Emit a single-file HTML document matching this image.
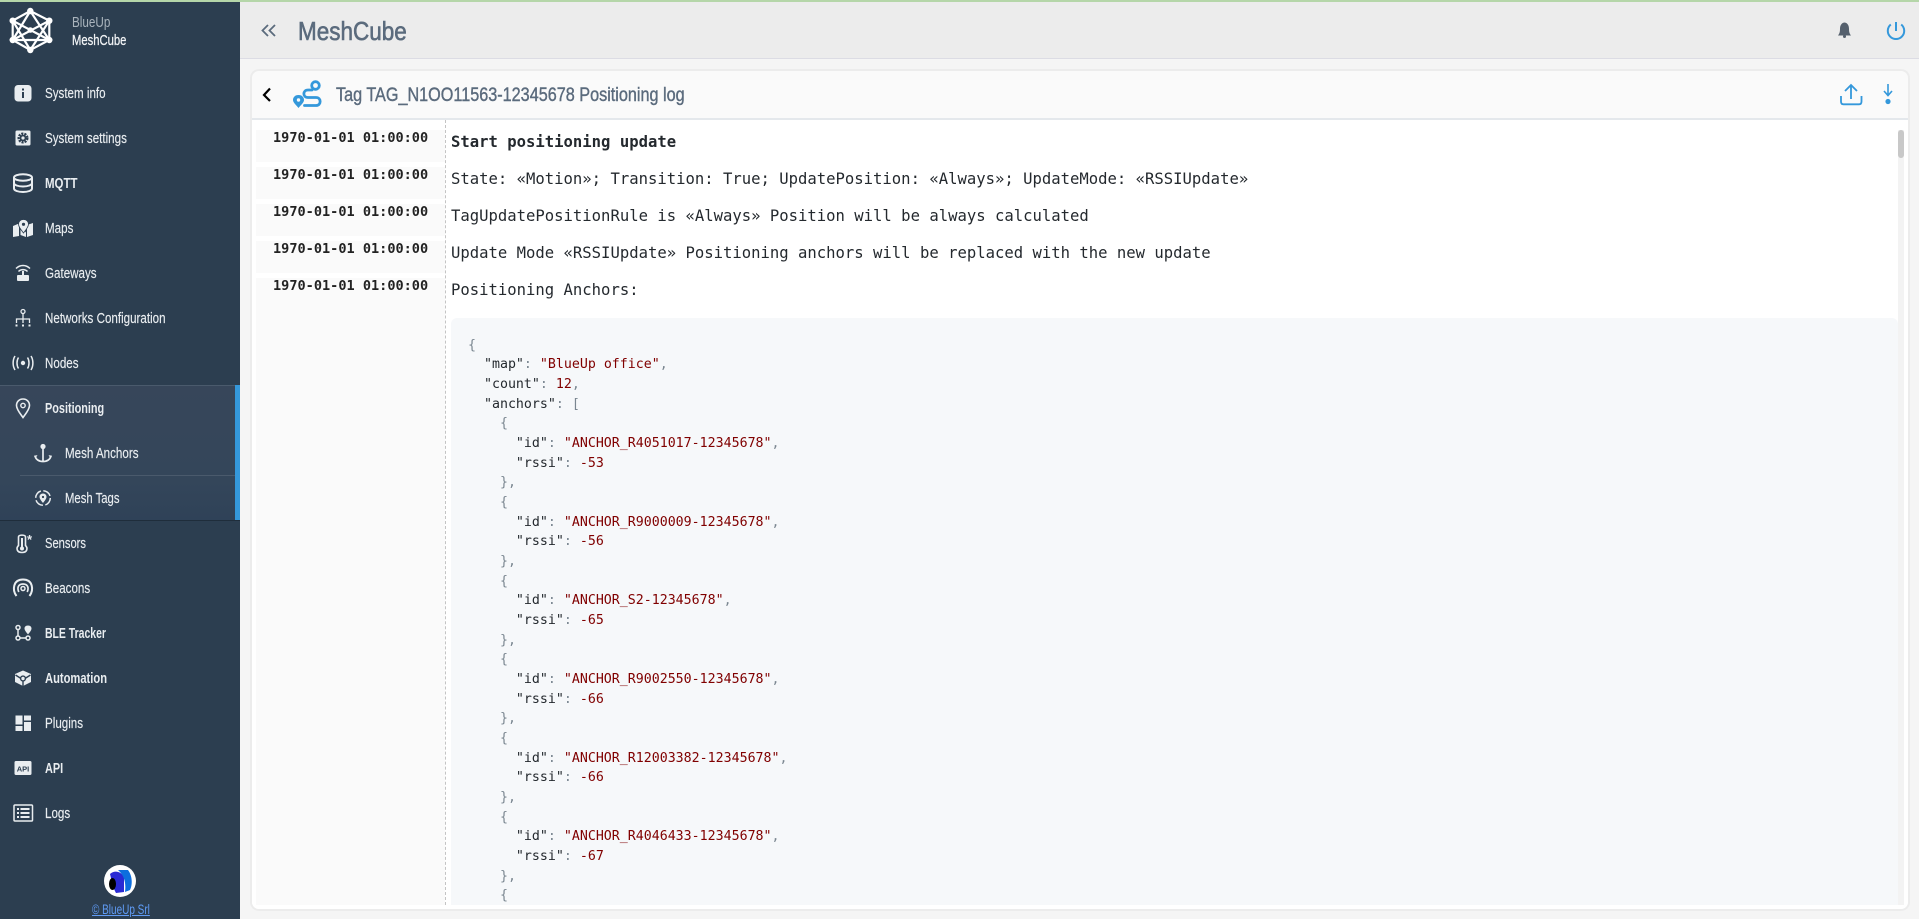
<!DOCTYPE html>
<html><head><meta charset="utf-8"><style>
html,body{margin:0;padding:0;width:1919px;height:919px;overflow:hidden;background:#f5f5f5}
div,a,span{box-sizing:border-box}
.abs,.m,.d,.t,pre{position:absolute}
#side{position:absolute;left:0;top:0;width:240px;height:919px;background:#2c3e50}
.m{left:45px;height:20px;font:14.5px/20px "Liberation Sans",sans-serif;color:#e9edf0;white-space:nowrap;transform:scaleX(.8);transform-origin:0 50%;-webkit-text-stroke:.15px #e9edf0}
.b{font-weight:bold;transform:scaleX(.75);-webkit-text-stroke:0}
.c{transform-origin:0 50%}
.d{left:256px;width:189px;height:32px;background:#fafafa;font:bold 13.57px/16px "DejaVu Sans Mono",monospace;color:#222;padding:0 0 0 17px;white-space:pre}
.t{left:451px;font:15.58px/20px "DejaVu Sans Mono",monospace;color:#24292e;white-space:pre}
pre{margin:0;font:13.27px/19.67px "DejaVu Sans Mono",monospace;color:#24292e}
.k{color:#24292e}.s{color:#800000}.p{color:#7a8690}
</style></head><body>
<div class="abs" style="left:0;top:0;width:1919px;height:2px;background:#b5d6a9;z-index:5"></div>
<div class="abs" style="left:240px;top:0;width:1679px;height:59px;background:#ececec;border-bottom:1px solid #dcdce4"></div>
<div class="abs c" style="left:298px;top:14px;font:26px/34px 'Liberation Sans',sans-serif;color:#5b6b7d;-webkit-text-stroke:.6px #5b6b7d;transform:scaleX(.865)">MeshCube</div>

<div class="abs" style="left:250px;top:69px;width:1660px;height:842px;background:#fafafa;border:2px solid #ececec;border-radius:9px;overflow:hidden">
 <div class="abs" style="left:0;top:47px;width:1656px;height:2px;background:#e4e8ec"></div>
 <div class="abs" style="left:0;top:49px;width:1656px;height:789px;background:#fff"></div>
</div>
<div class="abs c" style="left:336px;top:83px;font:19px/26px 'Liberation Sans',sans-serif;color:#5b6b7d;-webkit-text-stroke:.4px #5b6b7d;white-space:nowrap;transform:scaleX(.853)">Tag TAG_N1OO11563-12345678 Positioning log</div>

<div class="abs" style="left:256px;top:310px;width:189px;height:595px;background:#fafafa"></div>
<div class="abs" style="left:445px;top:120px;width:0;height:785px;border-left:1px dashed #c4c4c4"></div>
<div class="d" style="top:130px">1970-01-01 01:00:00</div>
<div class="d" style="top:167px">1970-01-01 01:00:00</div>
<div class="d" style="top:204px">1970-01-01 01:00:00</div>
<div class="d" style="top:241px">1970-01-01 01:00:00</div>
<div class="d" style="top:278px">1970-01-01 01:00:00</div>
<div class="t" style="top:132px;font-weight:bold">Start positioning update</div>
<div class="t" style="top:169px">State: «Motion»; Transition: True; UpdatePosition: «Always»; UpdateMode: «RSSIUpdate»</div>
<div class="t" style="top:206px">TagUpdatePositionRule is «Always» Position will be always calculated</div>
<div class="t" style="top:243px">Update Mode «RSSIUpdate» Positioning anchors will be replaced with the new update</div>
<div class="t" style="top:280px">Positioning Anchors:</div>

<div class="abs" style="left:451px;top:318px;width:1447px;height:587px;background:#f6f8fa;border-radius:6px 6px 0 0;overflow:hidden"></div>
<div class="abs" style="left:451px;top:318px;width:1447px;height:587px;overflow:hidden"><pre style="position:absolute;left:17px;top:17.5px"><span class="p">{</span>
  <span class="k">"map"</span><span class="p">:</span> <span class="s">"BlueUp office"</span><span class="p">,</span>
  <span class="k">"count"</span><span class="p">:</span> <span class="s">12</span><span class="p">,</span>
  <span class="k">"anchors"</span><span class="p">: [</span>
    <span class="p">{</span>
      <span class="k">"id"</span><span class="p">:</span> <span class="s">"ANCHOR_R4051017-12345678"</span><span class="p">,</span>
      <span class="k">"rssi"</span><span class="p">:</span> <span class="s">-53</span>
    <span class="p">},</span>
    <span class="p">{</span>
      <span class="k">"id"</span><span class="p">:</span> <span class="s">"ANCHOR_R9000009-12345678"</span><span class="p">,</span>
      <span class="k">"rssi"</span><span class="p">:</span> <span class="s">-56</span>
    <span class="p">},</span>
    <span class="p">{</span>
      <span class="k">"id"</span><span class="p">:</span> <span class="s">"ANCHOR_S2-12345678"</span><span class="p">,</span>
      <span class="k">"rssi"</span><span class="p">:</span> <span class="s">-65</span>
    <span class="p">},</span>
    <span class="p">{</span>
      <span class="k">"id"</span><span class="p">:</span> <span class="s">"ANCHOR_R9002550-12345678"</span><span class="p">,</span>
      <span class="k">"rssi"</span><span class="p">:</span> <span class="s">-66</span>
    <span class="p">},</span>
    <span class="p">{</span>
      <span class="k">"id"</span><span class="p">:</span> <span class="s">"ANCHOR_R12003382-12345678"</span><span class="p">,</span>
      <span class="k">"rssi"</span><span class="p">:</span> <span class="s">-66</span>
    <span class="p">},</span>
    <span class="p">{</span>
      <span class="k">"id"</span><span class="p">:</span> <span class="s">"ANCHOR_R4046433-12345678"</span><span class="p">,</span>
      <span class="k">"rssi"</span><span class="p">:</span> <span class="s">-67</span>
    <span class="p">},</span>
    <span class="p">{</span></pre></div>

<div class="abs" style="left:1898px;top:130px;width:6px;height:775px;background:#f3f3f3"></div>
<div class="abs" style="left:1898px;top:130px;width:6px;height:28px;background:#c8c8c8;border-radius:3px"></div>

<div id="side">
<div class="abs c" style="left:72px;top:14px;font:15px/18px 'Liberation Sans',sans-serif;color:#aab4bd;transform:scaleX(.78)">BlueUp</div>
<div class="abs c" style="left:72px;top:32px;font:15px/18px 'Liberation Sans',sans-serif;color:#f2f4f6;-webkit-text-stroke:.25px #f2f4f6;transform:scaleX(.75)">MeshCube</div>
<div class="abs" style="left:0;top:385px;width:240px;height:136px;background:linear-gradient(#37465a,#34465a 70%,#2f4258);border-top:1px solid #4a5a6c;border-bottom:1px solid #1f2d3b"></div>
<div class="abs" style="left:235px;top:385px;width:5px;height:135px;background:#3498db"></div>
<div class="abs" style="left:20px;top:475px;width:215px;height:1px;background:#4a5a6c"></div>
<div class="m" style="top:84px">System info</div>
<div class="m" style="top:129px">System settings</div>
<div class="m b" style="top:174px;transform:scaleX(.79)">MQTT</div>
<div class="m" style="top:219px">Maps</div>
<div class="m" style="top:264px">Gateways</div>
<div class="m" style="top:309px">Networks Configuration</div>
<div class="m" style="top:354px">Nodes</div>
<div class="m b" style="top:399px">Positioning</div>
<div class="m" style="top:444px;left:65px">Mesh Anchors</div>
<div class="m" style="top:489px;left:65px;transform:scaleX(.78)">Mesh Tags</div>
<div class="m" style="top:534px;transform:scaleX(.77)">Sensors</div>
<div class="m" style="top:579px">Beacons</div>
<div class="m b" style="top:624px;transform:scaleX(.72)">BLE Tracker</div>
<div class="m b" style="top:669px;transform:scaleX(.77)">Automation</div>
<div class="m" style="top:714px">Plugins</div>
<div class="m b" style="top:759px">API</div>
<div class="m" style="top:804px">Logs</div>
<a href="#" class="abs c" style="left:92px;top:902px;font:13.5px/16px 'Liberation Sans',sans-serif;color:#5f9bf5;text-decoration:underline;white-space:nowrap;transform:scaleX(.74)">© BlueUp Srl</a>
</div>

<svg class="abs" style="left:0;top:0;z-index:3" width="1919" height="919" viewBox="0 0 1919 919">
<!-- logo -->
<g fill="none" stroke="#fff" stroke-width="2.2">
<path d="M30.3 11L49.3 20.700V40L30.300 50L12.700 40V20.700Z"/>
<path d="M30.300 11L12.700 40H49.300Z"/>
<path d="M12.700 20.700L30.300 50L49.300 20.700M12.700 20.700L49.300 40M49.300 20.700L12.700 40"/>
</g>
<g fill="#fff"><circle cx="30.300" cy="11" r="3.200"/><circle cx="49.300" cy="20.700" r="3.200"/><circle cx="49.300" cy="40" r="3.200"/><circle cx="30.300" cy="50" r="3.200"/><circle cx="12.700" cy="40" r="3.200"/><circle cx="12.700" cy="20.700" r="3.200"/><circle cx="30.300" cy="30" r="2.800"/></g>
<!-- system info -->
<rect x="14.5" y="85" width="17" height="16.5" rx="3.5" fill="#e9edf0"/><rect x="22" y="92" width="2" height="6" fill="#2c3e50"/><rect x="22" y="88.5" width="2" height="2" fill="#2c3e50"/>
<!-- settings -->
<rect x="15.5" y="130.5" width="15" height="15" rx="1.5" fill="#e9edf0"/><circle cx="23" cy="138" r="4.2" fill="none" stroke="#2c3e50" stroke-width="2.6" stroke-dasharray="2 1"/><circle cx="23" cy="138" r="3.3" fill="#2c3e50"/><circle cx="23" cy="138" r="1.6" fill="#e9edf0"/>
<!-- mqtt -->
<g fill="none" stroke="#e9edf0" stroke-width="2"><ellipse cx="23" cy="177.5" rx="9" ry="3.3"/><path d="M14 177.5V188.5C14 190.5 18 192 23 192S32 190.5 32 188.5V177.5M14 183C14 185 18 186.5 23 186.5S32 185 32 183"/></g>
<!-- maps -->
<path d="M13 226L19 223.5V236L13 237ZM20.5 226.5L26 232.5V237L20.5 235ZM27 225L33 223V235L27 237Z" fill="#e9edf0"/><path d="M23.5 219.5C20.5 219.5 18.5 221.5 18.5 224.3C18.5 227 21.5 230.5 23.5 233C25.5 230.5 28.5 227 28.5 224.3C28.5 221.5 26.5 219.5 23.5 219.5Z" fill="#e9edf0" stroke="#2c3e50" stroke-width=".8"/><circle cx="23.5" cy="224.3" r="1.6" fill="#2c3e50"/>
<!-- gateways -->
<rect x="17" y="275" width="12" height="6" rx="1" fill="#e9edf0"/><rect x="22" y="271" width="2" height="5" fill="#e9edf0"/><path d="M16 268.5C20 264.5 26 264.5 30 268.5M18.5 271.5C21 269 25 269 27.5 271.5" fill="none" stroke="#e9edf0" stroke-width="1.5"/>
<!-- network -->
<g fill="none" stroke="#e9edf0" stroke-width="1.3"><circle cx="23" cy="311.5" r="2"/><path d="M23 313.5V319M16.5 323V319H29.5V323M23 319V323"/></g><g fill="#e9edf0"><rect x="15.5" y="324.5" width="2" height="2"/><rect x="22" y="324.5" width="2" height="2"/><rect x="28.5" y="324.5" width="2" height="2"/></g>
<!-- nodes -->
<circle cx="23" cy="363" r="2.2" fill="#e9edf0"/><path d="M18.5 357.5C16.5 360.5 16.5 365.5 18.5 368.5M27.5 357.5C29.5 360.5 29.5 365.5 27.5 368.5M15 356C12.5 360 12.5 366 15 370M31 356C33.5 360 33.5 366 31 370" fill="none" stroke="#e9edf0" stroke-width="1.5"/>
<!-- positioning -->
<path d="M23 399C19 399 16.5 402 16.5 405.5C16.5 409.5 20.5 414 23 417.5C25.500 414 29.500 409.500 29.500 405.500C29.500 402 27 399 23 399Z" fill="none" stroke="#e9edf0" stroke-width="1.6"/><circle cx="23" cy="405.500" r="2.200" fill="none" stroke="#e9edf0" stroke-width="1.4"/>
<!-- anchor -->
<circle cx="43" cy="446.500" r="2.600" fill="#e9edf0"/><path d="M43 449V461M35 455.500C35.500 459.500 39 461.500 43 461.500S50.500 459.500 51 455.500" fill="none" stroke="#e9edf0" stroke-width="1.700"/><path d="M34 456L37.500 455L35.500 458.500ZM52 456L48.500 455L50.500 458.500Z" fill="#e9edf0"/>
<!-- tags -->
<circle cx="43" cy="498" r="7.300" fill="none" stroke="#e9edf0" stroke-width="1.500" stroke-dasharray="9 2.500"/><path d="M43 493.500C40.800 493.500 39.500 495 39.500 496.800C39.500 499 41.500 501 43 503C44.500 501 46.500 499 46.500 496.800C46.500 495 45.200 493.500 43 493.500Z" fill="#e9edf0"/><circle cx="43" cy="497" r="1.100" fill="#2c3e50"/>
<!-- sensors -->
<path d="M18.500 537C18.500 534.500 25.500 534.500 25.500 537V545.500C28 548 27.500 552.500 22 552.500S16 548 18.500 545.500Z" fill="none" stroke="#e9edf0" stroke-width="1.600"/><path d="M22 538V548" stroke="#e9edf0" stroke-width="2"/><circle cx="22" cy="548.500" r="2" fill="#e9edf0"/><text x="27" y="544" font-family="Liberation Sans" font-weight="bold" font-size="13" fill="#e9edf0">*</text>
<!-- beacons -->
<g fill="none" stroke="#e9edf0" stroke-width="2"><path d="M16.500 596C12 590 13 579.500 23 579.500S34 590 29.500 596"/><path d="M18.800 592C17 588 18 584 23 584S29 588 27.200 592" stroke-width="1.700"/></g><circle cx="23" cy="588.500" r="2" fill="none" stroke="#e9edf0" stroke-width="1.500"/>
<!-- ble -->
<g fill="none" stroke="#e9edf0" stroke-width="1.500"><circle cx="18" cy="627.500" r="2"/><circle cx="18" cy="638" r="2"/><circle cx="28" cy="638" r="2"/><path d="M18 630V635.500M20.500 638H25.500"/></g><path d="M28 625.500C25.500 625.500 24.500 627 24.500 628.500C24.500 630.500 27 633 28 634.500C29 633 31.500 630.500 31.500 628.500C31.500 627 30.500 625.500 28 625.500Z" fill="#e9edf0"/>
<!-- automation -->
<path d="M23 670.500L31 674V682L23 686L15 682V674Z" fill="#e9edf0"/><path d="M15.500 675L21 678.500M30.500 675L25 678.500M23 686V681.500" stroke="#2c3e50" stroke-width="1.400"/><circle cx="23" cy="678.500" r="2.400" fill="none" stroke="#2c3e50" stroke-width="1.400"/>
<!-- plugins -->
<g fill="#e9edf0"><rect x="15.500" y="715.500" width="7" height="9"/><rect x="24" y="715.500" width="7" height="5"/><rect x="15.500" y="726" width="7" height="5"/><rect x="24" y="722" width="7" height="9"/></g>
<!-- api -->
<rect x="14.500" y="761" width="17" height="14" rx="1.500" fill="#e9edf0"/><text x="23" y="771.500" text-anchor="middle" font-family="Liberation Sans" font-weight="bold" font-size="7.500" fill="#2c3e50">API</text>
<!-- logs -->
<rect x="14" y="805" width="18.500" height="16" rx="1" fill="none" stroke="#e9edf0" stroke-width="1.500"/><g fill="#e9edf0"><rect x="17" y="808" width="2" height="2"/><rect x="17" y="812" width="2" height="2"/><rect x="17" y="816" width="2" height="2"/><rect x="20.500" y="808" width="9" height="2"/><rect x="20.500" y="812" width="9" height="2"/><rect x="20.500" y="816" width="9" height="2"/></g>
<!-- brand circle -->
<circle cx="120" cy="881" r="16" fill="#fff"/><path d="M110 874C114 870 121 871 124 877V892L116 893C113 888 112 882 110 874Z" fill="#2a2ad4"/><path d="M118 870H128C132 875 133 884 130 890L125 892C126 884 125 876 118 870Z" fill="#0d6ede"/><ellipse cx="112.500" cy="884" rx="3.500" ry="6" fill="#000"/>
<!-- header chevrons -->
<path d="M268 25L262.500 30.500L268 36M275 25L269.500 30.500L275 36" fill="none" stroke="#5b6b7d" stroke-width="1.800"/>
<!-- bell -->
<path d="M1844.500 22.500C1841 23 1840 26 1840 29C1840 32 1839.500 33.500 1838 35.500H1851C1849.500 33.500 1849 32 1849 29C1849 26 1848 23 1844.500 22.500Z" fill="#55606d"/><circle cx="1844.500" cy="36.500" r="1.500" fill="#55606d"/>
<!-- power -->
<path d="M1890.800 24.500A8.200 8.200 0 1 0 1901.200 24.500" fill="none" stroke="#3498db" stroke-width="2"/><path d="M1896 22V31" stroke="#3498db" stroke-width="2"/>
<!-- back -->
<path d="M270 88.500L264 95L270 101" fill="none" stroke="#000" stroke-width="2.200"/>
<!-- route -->
<g fill="none" stroke="#3498db" stroke-width="2.800" stroke-linecap="round"><path d="M304.500 105.500H316C321.500 105.500 321.500 97.500 316 97.500H308C302.500 97.500 302.500 90 308 90H312"/><circle cx="315.500" cy="85.500" r="3.800"/></g><path d="M298.500 95C294.800 95 293 97.500 293 100C293 102.500 296.500 105.500 298.500 108C300.500 105.500 304 102.500 304 100C304 97.500 302.200 95 298.500 95Z" fill="#3498db"/><circle cx="298.500" cy="100" r="1.700" fill="#fafafa"/>
<!-- upload -->
<path d="M1841 96V101.500C1841 103.500 1842 104.300 1843.500 104.300H1859C1860.500 104.300 1861.500 103.500 1861.500 101.500V96" fill="none" stroke="#3498db" stroke-width="1.800"/><path d="M1851 99V85.500M1845 91L1851 85L1857 91" fill="none" stroke="#3498db" stroke-width="1.800"/>
<!-- download dot -->
<path d="M1888 84V95M1884 91L1888 95.500L1892 91" fill="none" stroke="#3498db" stroke-width="1.600"/><circle cx="1888" cy="101.500" r="2.600" fill="#3498db"/>
</svg>
</body></html>
